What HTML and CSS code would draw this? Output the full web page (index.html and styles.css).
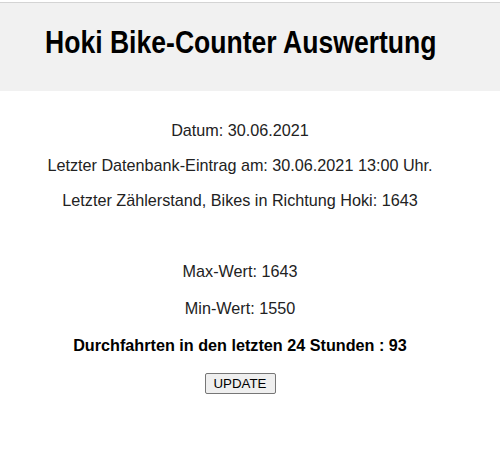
FILE: index.html
```html
<!DOCTYPE html>
<html lang="de">
<head>
<meta charset="utf-8">
<title>Hoki Bike-Counter Auswertung</title>
<link rel="stylesheet" href="styles.css">
</head>
<body>
<header class="header">
  <h1 class="title">Hoki Bike-Counter Auswertung</h1>
</header>
<main class="content">
  <p class="line">Datum: 30.06.2021</p>
  <p class="line">Letzter Datenbank-Eintrag am: 30.06.2021 13:00 Uhr.</p>
  <p class="line">Letzter Zählerstand, Bikes in Richtung Hoki: 1643</p>
  <p class="line">&nbsp;</p>
  <p class="line wide">Max-Wert: 1643</p>
  <p class="line wide">Min-Wert: 1550</p>
  <p class="line wide strong">Durchfahrten in den letzten 24 Stunden : 93</p>
  <button class="btn" type="button">UPDATE</button>
</main>
</body>
</html>
```
FILE: styles.css
```css
html, body {
  margin: 0;
  padding: 0;
  background: #ffffff;
}
body {
  font-family: "Liberation Sans", Arial, sans-serif;
  color: #222222;
  padding-top: 2px;
}
.header {
  background: #f1f1f1;
  border-top: 1px solid #d4d4d4;
  height: 88px;
  display: flex;
  align-items: center;
  padding-left: 45px;
}
.title {
  margin: 0;
  font-family: "Liberation Sans", Arial, sans-serif;
  font-weight: bold;
  font-size: 32px;
  color: #000000;
  line-height: 1;
  white-space: nowrap;
  transform: scaleX(0.83);
  transform-origin: left center;
  padding-bottom: 10px;
}
.content {
  display: flex;
  flex-direction: column;
  align-items: center;
  padding-top: 22px;
  padding-right: 20px;
}
.line {
  margin: 0;
  font-size: 16.2px;
  line-height: 35px;
}
.wide {
  line-height: 37px;
}
.strong {
  font-weight: bold;
  color: #000000;
}
.btn {
  margin-top: 9px;
  font-family: "Liberation Sans", Arial, sans-serif;
  font-size: 13.3px;
  color: #000;
  background: #efefef;
  border: 1px solid #767676;
  border-radius: 2px;
  padding: 1px 6px;
  width: 71px;
  height: 21px;
}
```
